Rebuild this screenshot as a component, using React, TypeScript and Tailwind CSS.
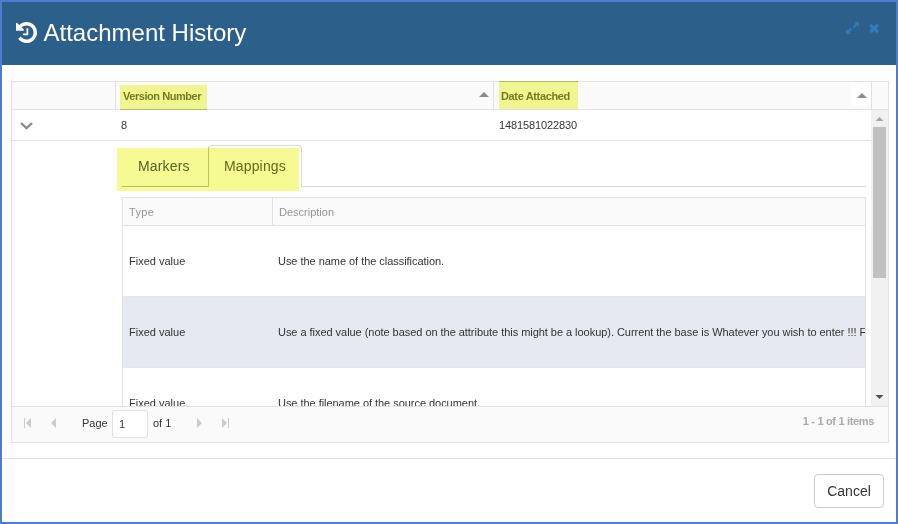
import type { ReactNode } from 'react';

function Highlight({ className }: { className: string }) {
  return <div className={`pointer-events-none absolute bg-[#f5fb92] mix-blend-multiply ${className}`} />;
}

function SortArrow() {
  return (
    <svg width="10" height="5" viewBox="0 0 10 5" className="block shrink-0 -translate-y-px fill-[#8b8b8b]">
      <path d="M0 5 L5 0 L10 5Z" />
    </svg>
  );
}

function HistoryIcon() {
  return (
    <svg width="21" height="21" viewBox="0 0 1536 1536" className="shrink-0 fill-white">
      <path d="M1536 768q0 156-61 298t-164 245-245 164-298 61q-172 0-327-72.5T177 1259q-7-10-6.5-22.5t8.5-20.5l137-138q10-9 25-9 16 2 23 12 73 95 179 147t225 52q104 0 198.5-40.5T1130 1130t109.5-163.5T1280 768t-40.5-198.5T1130 406 966.5 296.5 768 256q-98 0-188 35.5T420 393l137 138q31 30 14 69-17 40-59 40H64q-26 0-45-19T0 576V128q0-42 40-59 39-17 69 14l130 129q107-101 244.5-156.5T768 0q156 0 298 61t245 164 164 245 61 298z M896 480v448q0 14-9 23t-23 9H544q-14 0-23-9t-9-23v-64q0-14 9-23t23-9h224V480q0-14 9-23t23-9h64q14 0 23 9t9 23z" />
    </svg>
  );
}

function Header() {
  return (
    <header className="flex h-[63px] shrink-0 items-start bg-[#2c5f8a] pl-[14px] pr-[17px]">
      <div className="mt-5">
        <HistoryIcon />
      </div>
      <h1 className="ml-[6.5px] mt-[17px] whitespace-nowrap text-[24px] leading-7 text-white">Attachment History</h1>
      <div className="ml-auto mt-5 flex gap-[10px]">
        <svg width="13" height="12" viewBox="0 0 13 12" className="fill-[#337ab7]">
          <path d="M8 0H13V5L11.4 3.4L8.3 6.3L6.9 4.9L9.7 1.7Z M5 12H0V7L1.6 8.6L4.7 5.7L6.1 7.1L3.3 10.3Z" />
        </svg>
        <svg width="10" height="12" viewBox="0 0 10 12" className="stroke-[#337ab7]">
          <path d="M1.2 2.8L8.8 10.2M8.8 2.8L1.2 10.2" strokeWidth="3.4" />
        </svg>
      </div>
    </header>
  );
}

function MappingRow({ shaded, description }: { shaded?: boolean; description: ReactNode }) {
  return (
    <div
      className={`flex h-[71px] shrink-0 items-center whitespace-nowrap border-b border-[#e6e6e6] text-[#333] ${
        shaded ? 'bg-[#e6e9f2]' : 'bg-white'
      }`}
    >
      <div className="w-[155px] shrink-0 pl-[6px]">Fixed value</div>
      <div className="tracking-[-0.04px]">{description}</div>
    </div>
  );
}

function Detail() {
  return (
    <div className="relative flex h-[265px] flex-col overflow-hidden pl-[110px] pr-[5px]">
      <div className="flex h-[46px] shrink-0 items-end text-[14px] text-[#5c6440]">
        <div className="flex h-[42px] w-[86px] items-center border-b border-[#bfc0a8] pl-4 tracking-[0.15px]">
          Markers
        </div>
        <div className="flex h-[42px] w-[94px] items-center rounded-t-[4px] border border-b-0 border-[#d9d9d9] border-l-[#c4c5b0] pb-0.5 pl-[15px] tracking-[0.15px] text-[#656b28]">
          Mappings
        </div>
        <div className="h-[42px] flex-1 border-b border-[#d9d9d9]" />
      </div>
      <div className="mt-[10px] flex h-[260px] shrink-0 flex-col overflow-hidden border border-[#e2e2e2]">
        <div className="flex h-7 shrink-0 border-b border-[#e2e2e2] bg-[#fafafa] text-[#949494]">
          <div className="flex w-[150px] items-center border-r border-[#e2e2e2] pl-[6px] tracking-[0.3px]">Type</div>
          <div className="flex items-center pl-[6px]">Description</div>
        </div>
        <MappingRow description="Use the name of the classification." />
        <MappingRow
          shaded
          description="Use a fixed value (note based on the attribute this might be a lookup). Current the base is Whatever you wish to enter !!! F"
        />
        <MappingRow description="Use the filename of the source document." />
      </div>
      <Highlight className="left-[105px] top-[7px] h-[43px] w-[182px]" />
    </div>
  );
}

function Scrollbar() {
  return (
    <div className="flex w-[17px] shrink-0 flex-col items-center bg-[#f1f1f1]">
      <svg width="17" height="17" viewBox="0 0 17 17" className="fill-[#a3a3a3]">
        <path d="M4.5 11L8.5 7L12.5 11Z" />
      </svg>
      <div className="h-[151px] w-[13px] bg-[#c1c1c1]" />
      <svg width="17" height="17" viewBox="0 0 17 17" className="mt-auto fill-[#505050]">
        <path d="M4.5 6H12.5L8.5 10Z" />
      </svg>
    </div>
  );
}

function Pager() {
  return (
    <div className="flex h-9 shrink-0 items-center border-t border-[#e2e2e2] bg-[#fafafa] pb-[3px] text-[#333]">
      <svg width="60" height="10" viewBox="0 0 60 10" className="fill-[#cbcbcb]">
        <path d="M12 0H13V10H12Z M19 0V10L14 5Z M44 0V10L39 5Z" />
      </svg>
      <div className="ml-[10px] w-[30px]">Page</div>
      <div className="mt-0.5 flex h-7 w-9 items-center rounded-[3px] border border-[#e2e2e2] bg-white pl-[6px]">1</div>
      <div className="ml-[5px] w-[20px] whitespace-nowrap">of 1</div>
      <svg width="60" height="10" viewBox="0 0 60 10" className="fill-[#cbcbcb]">
        <path d="M24 0V10L29 5Z M49 0V10L54 5Z M55 0H56V10H55Z" />
      </svg>
      <div className="-mt-[4px] ml-auto mr-[14px] font-bold tracking-[-0.33px] text-[#aaa]">1 - 1 of 1 items</div>
    </div>
  );
}

function Grid() {
  return (
    <section className="ml-[9px] mt-4 flex h-[362px] w-[878px] shrink-0 flex-col border border-[#e2e2e2] text-[11px] leading-4">
      <div className="relative flex h-7 shrink-0 border-b border-[#e2e2e2] bg-[#fafafa] font-bold text-[#7b7d38]">
        <div className="w-[104px] border-r border-[#e2e2e2]" />
        <div className="flex w-[378px] items-center justify-between border-r border-[#e2e2e2] pl-[7px] pr-1">
          <span className="tracking-[-0.45px]">Version Number</span>
          <SortArrow />
        </div>
        <div className="flex w-[378px] items-center justify-between border-r border-[#e2e2e2] pl-[7px]">
          <span className="tracking-[-0.36px]">Date Attached</span>
          <div className="flex h-6 w-5 items-center justify-center self-start bg-white pl-0.5 pt-1">
            <SortArrow />
          </div>
        </div>
        <Highlight className="left-[108px] top-[3px] h-[25px] w-[87px] border-b border-[#cdd07a]" />
        <Highlight className="-top-px left-[487px] h-[28px] w-[79px] border-t border-[#cdd07a]" />
      </div>
      <div className="flex h-[296px] shrink-0">
        <div className="min-w-0 flex-1">
          <div className="flex h-[31px] items-center border-b border-[#e2e2e2] text-[#333]">
            <svg width="13" height="8" viewBox="0 0 13 8" className="ml-2 mt-0.5 fill-none stroke-[#8b8b8b]">
              <path d="M1 1L6.5 6.2L12 1" strokeWidth="2.4" />
            </svg>
            <div className="ml-[88px] w-[378px]">8</div>
            <div className="tracking-[-0.12px]">1481581022830</div>
          </div>
          <Detail />
        </div>
        <Scrollbar />
      </div>
      <Pager />
    </section>
  );
}

export default function App() {
  return (
    <div className="flex h-[524px] w-[898px] flex-col overflow-hidden border-2 border-[#4f7dcd] bg-white font-['Liberation_Sans',Arial,sans-serif]">
      <Header />
      <Grid />
      <footer className="mt-[15px] flex flex-1 items-start justify-end border-t border-[#e2e2e2] pr-3 pt-[15px]">
        <button className="h-[34px] w-[70px] rounded-[4px] border border-[#ccc] bg-white text-[14px] text-[#333]">
          Cancel
        </button>
      </footer>
    </div>
  );
}
